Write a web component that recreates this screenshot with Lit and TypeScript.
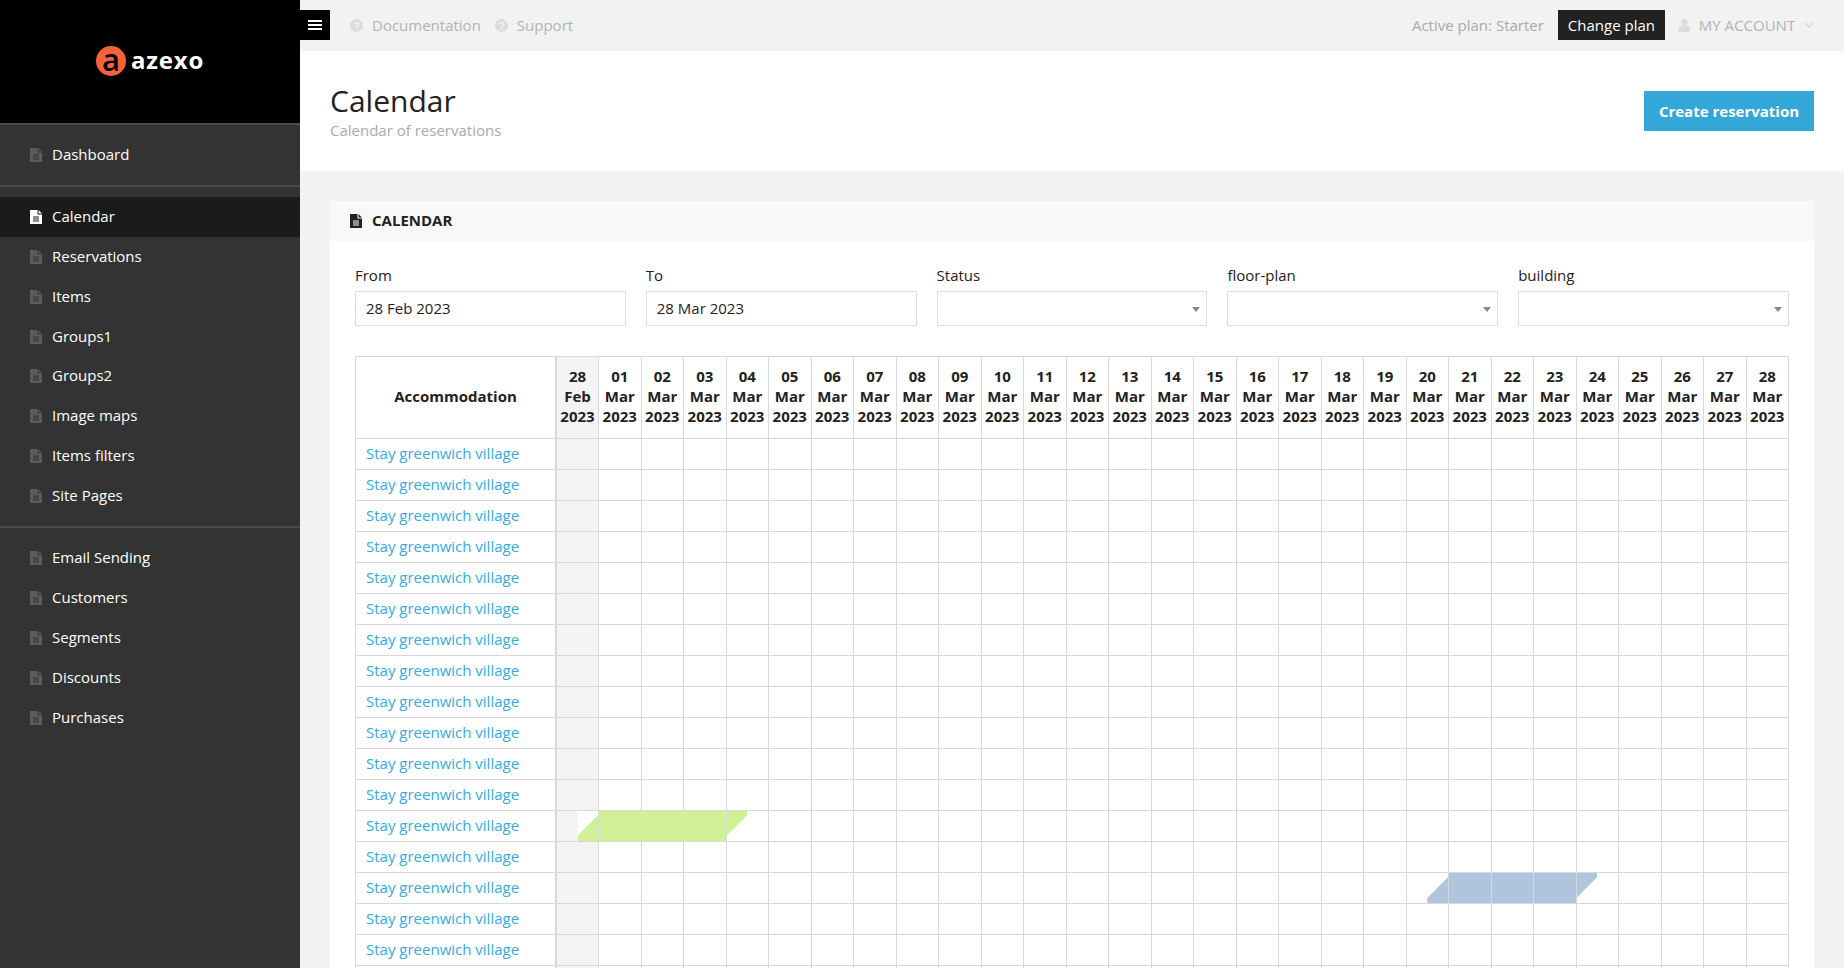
import { LitElement, css, html, nothing, svg, type TemplateResult } from "lit";
import { customElement } from "lit/decorators.js";

const MAIN_FONT = css`"Open Sans", "Noto Sans", sans-serif`;

const GROUPS: string[][] = [
  ["Dashboard"],
  ["Calendar", "Reservations", "Items", "Groups1", "Groups2", "Image maps", "Items filters", "Site Pages"],
  ["Email Sending", "Customers", "Segments", "Discounts", "Purchases"],
];

// one fake booking per colour: row, first day column, last day column
const BOOKINGS = [
  { row: 12, from: 0, to: 4, color: "#d0f095" },
  { row: 14, from: 20, to: 24, color: "#b0c4de" },
];

const ROW_COUNT = 18;

function dayColumns(): { day: string; month: string }[] {
  const cols = [{ day: "28", month: "Feb" }];
  for (let d = 1; d <= 28; d++) {
    cols.push({ day: d.toString().padStart(2, "0"), month: "Mar" });
  }
  return cols;
}

function fileIcon(): TemplateResult {
  return html`<svg class="file" viewBox="0 0 12 14" width="12" height="14">
    ${svg`<path fill="currentColor" fill-rule="evenodd" d="M0 0H7.5V4.5H12V14H0ZM8.5 0 12 3.5H8.5ZM3 6.5V7.5H9V6.5ZM3 8.5V9.5H9V8.5ZM3 10.5V11.5H9V10.5Z"/>`}
  </svg>`;
}

function helpIcon(): TemplateResult {
  return html`<svg viewBox="0 0 13 13" width="13" height="13">
    ${svg`<circle cx="6.5" cy="6.5" r="6.5" fill="#dcdcdc"/>
    <path d="M4.5 5.2C4.6 3.2 8.6 3.2 8.6 5.2 8.6 6.6 6.6 6.5 6.6 8" fill="none" stroke="#f2f2f2" stroke-width="1.5"/>
    <rect x="5.8" y="9" width="1.6" height="1.6" fill="#f2f2f2"/>`}
  </svg>`;
}

@customElement("app-sidebar")
export class SidebarComponent extends LitElement {
  render(): TemplateResult {
    return html`<div class="brand">
        <span class="mark">a</span>
        <span class="word">azexo</span>
      </div>
      ${GROUPS.map(
        (group) => html`<ul>
          ${group.map(
            (name) => html`<li class=${name === "Calendar" ? "active" : ""}>
              ${fileIcon()}<span>${name}</span>
            </li>`,
          )}
        </ul>`,
      )}`;
  }

  static styles = css`
    :host {
      display: block;
      width: 300px;
      background: #333;
      color: #fff;
      font-family: ${MAIN_FONT};
      font-size: 15px;
    }

    .brand {
      box-sizing: border-box;
      height: 123px;
      padding-bottom: 2px;
      background: #000;
      display: flex;
      align-items: center;
      justify-content: center;
      gap: 5px;
    }

    .mark {
      width: 30px;
      height: 30px;
      border-radius: 50%;
      background: #f8623a;
      color: #000;
      font-size: 31px;
      font-weight: 600;
      line-height: 26px;
      text-align: center;
    }

    .word {
      margin-bottom: 2px;
      font-size: 24px;
      font-weight: 700;
      line-height: 30px;
      letter-spacing: 0.8px;
    }

    ul {
      list-style: none;
      margin: 0;
      padding: 10px 0;
      border-top: 2px solid #4a4a4a;
    }

    li {
      height: 39.9px;
      padding-left: 30px;
      display: flex;
      align-items: center;
      gap: 10px;
    }

    li span {
      margin-bottom: 2px;
    }

    li .file {
      color: #5c5c5c;
    }

    li.active {
      background: #1b1b1b;
    }

    li.active .file {
      color: #fff;
    }
  `;
}

@customElement("app-topbar")
export class TopbarComponent extends LitElement {
  render(): TemplateResult {
    return html`<button class="burger" aria-label="menu"><i></i><i></i><i></i></button>
      <a class="help">${helpIcon()}Documentation</a>
      <a class="help">${helpIcon()}Support</a>
      <span class="plan">Active plan: Starter</span>
      <button class="change">Change plan</button>
      <a class="account">
        <svg viewBox="0 0 11 13" width="11" height="13">
          ${svg`<circle cx="5.5" cy="3.2" r="3.2" fill="#dcdcdc"/><path d="M0 13V9.5C0 7.5 1.5 6.8 2.8 6.8H8.2C9.5 6.8 11 7.5 11 9.5V13Z" fill="#dcdcdc"/>`}
        </svg>
        <span>MY ACCOUNT</span>
        <svg viewBox="0 0 10 6" width="10" height="6">
          ${svg`<path d="M1 1 5 5 9 1" fill="none" stroke="#dcdcdc" stroke-width="1.6"/>`}
        </svg>
      </a>`;
  }

  static styles = css`
    :host {
      display: flex;
      align-items: flex-start;
      height: 51px;
      background: #f2f2f2;
      font-family: ${MAIN_FONT};
      font-size: 15px;
      color: #b2b2b2;
    }

    .burger {
      width: 30px;
      height: 30px;
      margin: 10px 20px 0 0;
      padding: 0;
      border: 0;
      background: #000;
      display: flex;
      flex-direction: column;
      justify-content: center;
      align-items: center;
      gap: 2px;
    }

    .burger i {
      display: block;
      width: 14px;
      height: 2px;
      background: #fff;
    }

    .help {
      display: flex;
      align-items: center;
      gap: 9px;
      height: 30px;
      margin-top: 10px;
      margin-right: 14px;
    }

    .plan {
      margin-left: auto;
      margin-right: 14px;
      margin-top: 10px;
      line-height: 30px;
      color: #aaa;
    }

    .change {
      height: 30px;
      margin-top: 10px;
      padding: 0 10px;
      border: 0;
      background: #222;
      color: #fff;
      font: inherit;
    }

    .account {
      display: flex;
      align-items: center;
      justify-content: space-between;
      box-sizing: border-box;
      width: 135px;
      height: 30px;
      margin: 10px 30px 0 14px;
      white-space: nowrap;
    }
  `;
}

@customElement("app-calendar-table")
export class CalendarTableComponent extends LitElement {
  private cellMark(row: number, col: number): TemplateResult | typeof nothing {
    const booking = BOOKINGS.find((b) => b.row === row && col >= b.from && col <= b.to);
    if (!booking) return nothing;
    const kind = col === booking.from ? "start" : col === booking.to ? "end" : "mid";
    return html`<span class="mark ${kind}" style="background:${booking.color}"></span>`;
  }

  render(): TemplateResult {
    const cols = dayColumns();
    const rows = Array.from({ length: ROW_COUNT }, (_, i) => i);
    return html`<table>
      <thead>
        <tr>
          <th class="name">Accommodation</th>
          ${cols.map(
            (c, i) => html`<th class=${i === 0 ? "today" : ""}>${c.day} ${c.month} 2023</th>`,
          )}
        </tr>
      </thead>
      <tbody>
        ${rows.map(
          (r) => html`<tr>
            <td class="name">${r < ROW_COUNT - 1 ? html`<a>Stay greenwich village</a>` : nothing}</td>
            ${cols.map(
              (_, i) => html`<td class=${i === 0 ? "today" : ""}>${this.cellMark(r, i)}</td>`,
            )}
          </tr>`,
        )}
      </tbody>
    </table>`;
  }

  static styles = css`
    :host {
      display: block;
      font-family: ${MAIN_FONT};
      font-size: 15px;
      color: #222;
    }

    table {
      width: 100%;
      table-layout: fixed;
      border-collapse: collapse;
    }

    th,
    td {
      border: 1px solid #d9d9d9;
      padding: 0;
      position: relative;
    }

    th {
      padding: 9px 0 12px;
      line-height: 20px;
      font-weight: 700;
      text-align: center;
      word-spacing: 100vw;
    }

    th.name {
      width: 199px;
      word-spacing: normal;
      border-right-width: 2px;
    }

    td {
      height: 30px;
      line-height: 20px;
    }

    td.name {
      padding: 0 0 2px 10px;
      box-sizing: border-box;
      border-right-width: 2px;
      white-space: nowrap;
    }

    td.name a {
      color: #35ace0;
    }

    .today {
      background: #f4f4f4;
    }

    .mark {
      position: absolute;
      top: 0;
      bottom: 0;
      display: block;
    }

    .mark.mid {
      left: 0;
      right: 0;
    }

    .mark.start {
      right: 0;
      width: 50%;
      clip-path: polygon(0 calc(100% - 5px), 100% 4px, 100% 100%, 0 100%);
    }

    .mark.end {
      left: 0;
      width: 50%;
      clip-path: polygon(0 0, 100% 0, 100% 4px, 0 calc(100% - 5px));
    }

    /* the white half under the green start */
    td.today:has(.mark.start)::before {
      content: "";
      position: absolute;
      top: 0;
      bottom: 0;
      right: 0;
      width: 50%;
      background: #fff;
    }
  `;
}

@customElement("app-root")
export class AppRoot extends LitElement {
  render(): TemplateResult {
    return html`<app-sidebar></app-sidebar>
      <main>
        <app-topbar></app-topbar>
        <header>
          <div class="titles">
            <h1>Calendar</h1>
            <p>Calendar of reservations</p>
          </div>
          <button>Create reservation</button>
        </header>
        <section>
          <h2>${fileIcon()}<span>CALENDAR</span></h2>
          <div class="body">
            <div class="filters">
              <label>From<span class="field">28 Feb 2023</span></label>
              <label>To<span class="field">28 Mar 2023</span></label>
              <label>Status<span class="field select"></span></label>
              <label>floor-plan<span class="field select"></span></label>
              <label>building<span class="field select"></span></label>
            </div>
            <app-calendar-table></app-calendar-table>
          </div>
        </section>
      </main>`;
  }

  static styles = css`
    :host {
      display: grid;
      grid-template-columns: 300px 1fr;
      height: 968px;
      overflow: hidden;
      font-family: ${MAIN_FONT};
      font-size: 15px;
      color: #222;
    }

    main {
      background: #f2f2f2;
      min-width: 0;
    }

    header {
      height: 120px;
      background: #fff;
      padding: 0 30px;
      display: flex;
      align-items: center;
      justify-content: space-between;
    }

    .titles {
      margin-bottom: 2px;
    }

    h1 {
      margin: 0;
      font-size: 30px;
      font-weight: 400;
      line-height: 40px;
    }

    header p {
      margin: -1px 0 0;
      line-height: 20px;
      color: #aaa;
    }

    header button {
      width: 170px;
      height: 40px;
      border: 0;
      background: #34a7d9;
      color: #fff;
      font: inherit;
      font-weight: 700;
    }

    section {
      margin: 30px 30px 0;
      background: #fff;
      min-height: 800px;
    }

    h2 {
      margin: 0;
      height: 40px;
      padding-left: 20px;
      background: #f8f8f8;
      display: flex;
      align-items: center;
      gap: 10px;
      font-size: 15px;
      font-weight: 700;
    }

    h2 span {
      margin-bottom: 2px;
    }

    .body {
      padding: 24px 25px 0;
    }

    .filters {
      display: grid;
      grid-template-columns: repeat(5, 1fr);
      gap: 20px;
      margin-bottom: 30px;
    }

    label {
      display: block;
      line-height: 20px;
    }

    .field {
      display: block;
      box-sizing: border-box;
      height: 35px;
      margin-top: 6px;
      padding: 0 10px;
      border: 1px solid #ddd;
      line-height: 33px;
      position: relative;
    }

    .select::after {
      content: "";
      position: absolute;
      right: 6px;
      top: 15px;
      border: 4px solid transparent;
      border-top: 5px solid #888;
      border-bottom: 0;
    }
  `;
}

declare global {
  interface HTMLElementTagNameMap {
    "app-root": AppRoot;
    "app-sidebar": SidebarComponent;
    "app-topbar": TopbarComponent;
    "app-calendar-table": CalendarTableComponent;
  }
}
